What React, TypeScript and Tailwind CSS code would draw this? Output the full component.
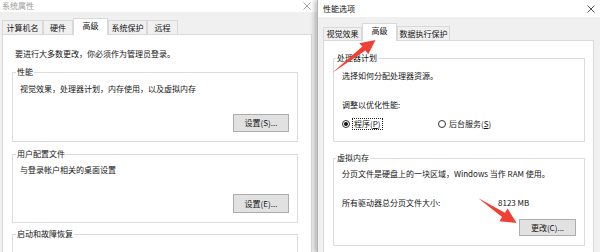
import React from "react";

function CloseX({ color }: { color: string }) {
  return (
    <svg width="8" height="8" viewBox="0 0 8 8">
      <path d="M0.5 0.5L7.5 7.5M7.5 0.5L0.5 7.5" stroke={color} strokeWidth="0.8" />
    </svg>
  );
}

function Tab({ label, active, className }: { label: string; active?: boolean; className: string }) {
  return active ? (
    <div
      className={`relative z-10 -mb-px bg-white border border-b-0 border-[#d9d9d9] flex items-center justify-center ${className}`}
    >
      {label}
    </div>
  ) : (
    <div
      className={`bg-[#f0f0f0] border border-b-0 border-[#d9d9d9] flex items-center justify-center ${className}`}
    >
      {label}
    </div>
  );
}

function Btn({ label, className }: { label: string; className: string }) {
  return (
    <div
      className={`bg-[#e1e1e1] border border-[#adadad] flex items-center justify-center ${className}`}
    >
      {label}
    </div>
  );
}

function Radio({ checked }: { checked?: boolean }) {
  return (
    <span className="w-[8px] h-[8px] rounded-full border border-[#333] bg-white flex items-center justify-center">
      {checked && <span className="w-[4px] h-[4px] rounded-full bg-[#111]" />}
    </span>
  );
}

function SystemProps() {
  return (
    <div className="w-[317px] h-full bg-[#f0f0f0] flex flex-col shrink-0">
      <div className="h-[20px] bg-white flex items-center justify-between pl-[2px] pr-[6px]">
        <span className="text-[#9a9a9a]">系统属性</span>
        <CloseX color="#8a8a8a" />
      </div>
      <div className="pl-[2px] pt-[6px] flex-1 flex flex-col">
        <div className="flex items-end h-[16px]">
          <Tab label="计算机名" className="w-[41px] h-[14px]" />
          <Tab label="硬件" className="w-[30px] h-[14px]" />
          <Tab label="高级" active className="w-[35px] h-[17px] pb-[2px]" />
          <Tab label="系统保护" className="w-[39px] h-[14px]" />
          <Tab label="远程" className="w-[31px] h-[14px]" />
        </div>
        <div className="flex-1 w-[310px] bg-white border border-b-0 border-[#d9d9d9]">
          <p className="mt-[13px] ml-[12px]">要进行大多数更改，你必须作为管理员登录。</p>

          <fieldset className="mt-[6px] ml-[9px] w-[286px] border border-[#dcdcdc] pl-[3px] pr-[8px] pb-[9px]">
            <legend className="px-[1px]">性能</legend>
            <p className="pt-[5px] pl-[4px]">视觉效果，处理器计划，内存使用，以及虚拟内存</p>
            <div className="flex justify-end mt-[19px]">
              <Btn label="设置(S)..." className="w-[56px] h-[18px]" />
            </div>
          </fieldset>

          <fieldset className="mt-[6px] ml-[9px] w-[286px] border border-[#dcdcdc] pl-[3px] pr-[8px] pb-[9px]">
            <legend className="px-[1px]">用户配置文件</legend>
            <p className="pt-[4px] pl-[4px]">与登录帐户相关的桌面设置</p>
            <div className="flex justify-end mt-[18px]">
              <Btn label="设置(E)..." className="w-[56px] h-[19px]" />
            </div>
          </fieldset>

          <fieldset className="mt-[5px] ml-[9px] w-[286px] h-[40px] border border-[#dcdcdc] pl-[3px] pr-[8px]">
            <legend className="px-[1px]">启动和故障恢复</legend>
          </fieldset>
        </div>
      </div>
    </div>
  );
}

function PerfOptions() {
  return (
    <div className="relative z-20 flex-1 h-full bg-[#f0f0f0] border-l border-[#b4b4b4] flex flex-col shadow-[-3px_0_4px_rgba(0,0,0,0.22)]">
      <div className="h-[17px] bg-white flex items-center justify-between pl-[5px] pr-[5px]">
        <span className="text-[#111]">性能选项</span>
        <CloseX color="#222" />
      </div>
      <div className="pl-[5px] pt-[6px] flex-1 flex flex-col">
        <div className="flex items-end h-[17px]">
          <Tab label="视觉效果" className="w-[39px] h-[13px]" />
          <Tab label="高级" active className="w-[35px] h-[18px] pb-[3px]" />
          <Tab label="数据执行保护" className="w-[53px] h-[14px]" />
        </div>
        <div className="flex-1 w-[271px] bg-white border border-b-0 border-[#d9d9d9]">
          <fieldset className="mt-[11px] ml-[9px] w-[252px] border border-[#dcdcdc] pl-[2px] pr-[8px] pb-[11px]">
            <legend className="px-[1px]">处理器计划</legend>
            <div className="pl-[6px]">
              <p className="pt-[6px]">选择如何分配处理器资源。</p>
              <p className="mt-[17px]">调整以优化性能:</p>
              <div className="mt-[7px] flex items-center">
                <div className="w-[96px] flex items-center gap-[2px]">
                  <Radio checked />
                  <span className="border border-dotted border-[#222] px-[1px] leading-[10px]">
                    程序(<span className="underline">P</span>)
                  </span>
                </div>
                <div className="flex items-center gap-[3px]">
                  <Radio />
                  <span>
                    后台服务(<span className="underline">S</span>)
                  </span>
                </div>
              </div>
            </div>
          </fieldset>

          <fieldset className="mt-[10px] ml-[9px] w-[252px] border border-[#dcdcdc] pl-[2px] pr-[8px] pb-[9px]">
            <legend className="px-[1px]">虚拟内存</legend>
            <div className="pl-[6px]">
              <p className="pt-[4px]">分页文件是硬盘上的一块区域，Windows 当作 RAM 使用。</p>
              <div className="mt-[17px] flex">
                <span className="w-[156px]">所有驱动器总分页文件大小:</span>
                <span>8123 MB</span>
              </div>
            </div>
            <div className="flex justify-end mt-[10px]">
              <Btn label="更改(C)..." className="w-[57px] h-[17px]" />
            </div>
          </fieldset>
        </div>
      </div>
    </div>
  );
}

export default function App() {
  return (
    <div className="relative w-[600px] h-[252px] overflow-hidden flex bg-[#f0f0f0] text-[8px] leading-[12px] text-[#141414] font-['Noto_Sans_CJK_SC','Noto_Sans',sans-serif]">
      <SystemProps />
      <PerfOptions />

      {/* red annotation arrows */}
      <svg className="absolute inset-0 z-30 pointer-events-none" width="600" height="252" viewBox="0 0 600 252">
        <polygon
          points="332,73 365.4,50.5 368.3,54.2 375.5,40 359.2,43.2 362.4,46.5"
          fill="#ef4034"
        />
        <polygon
          points="478,198 504.9,212.7 507.6,208.6 516.5,223 499.4,221.2 502.1,216.9"
          fill="#ef4034"
        />
      </svg>
    </div>
  );
}
